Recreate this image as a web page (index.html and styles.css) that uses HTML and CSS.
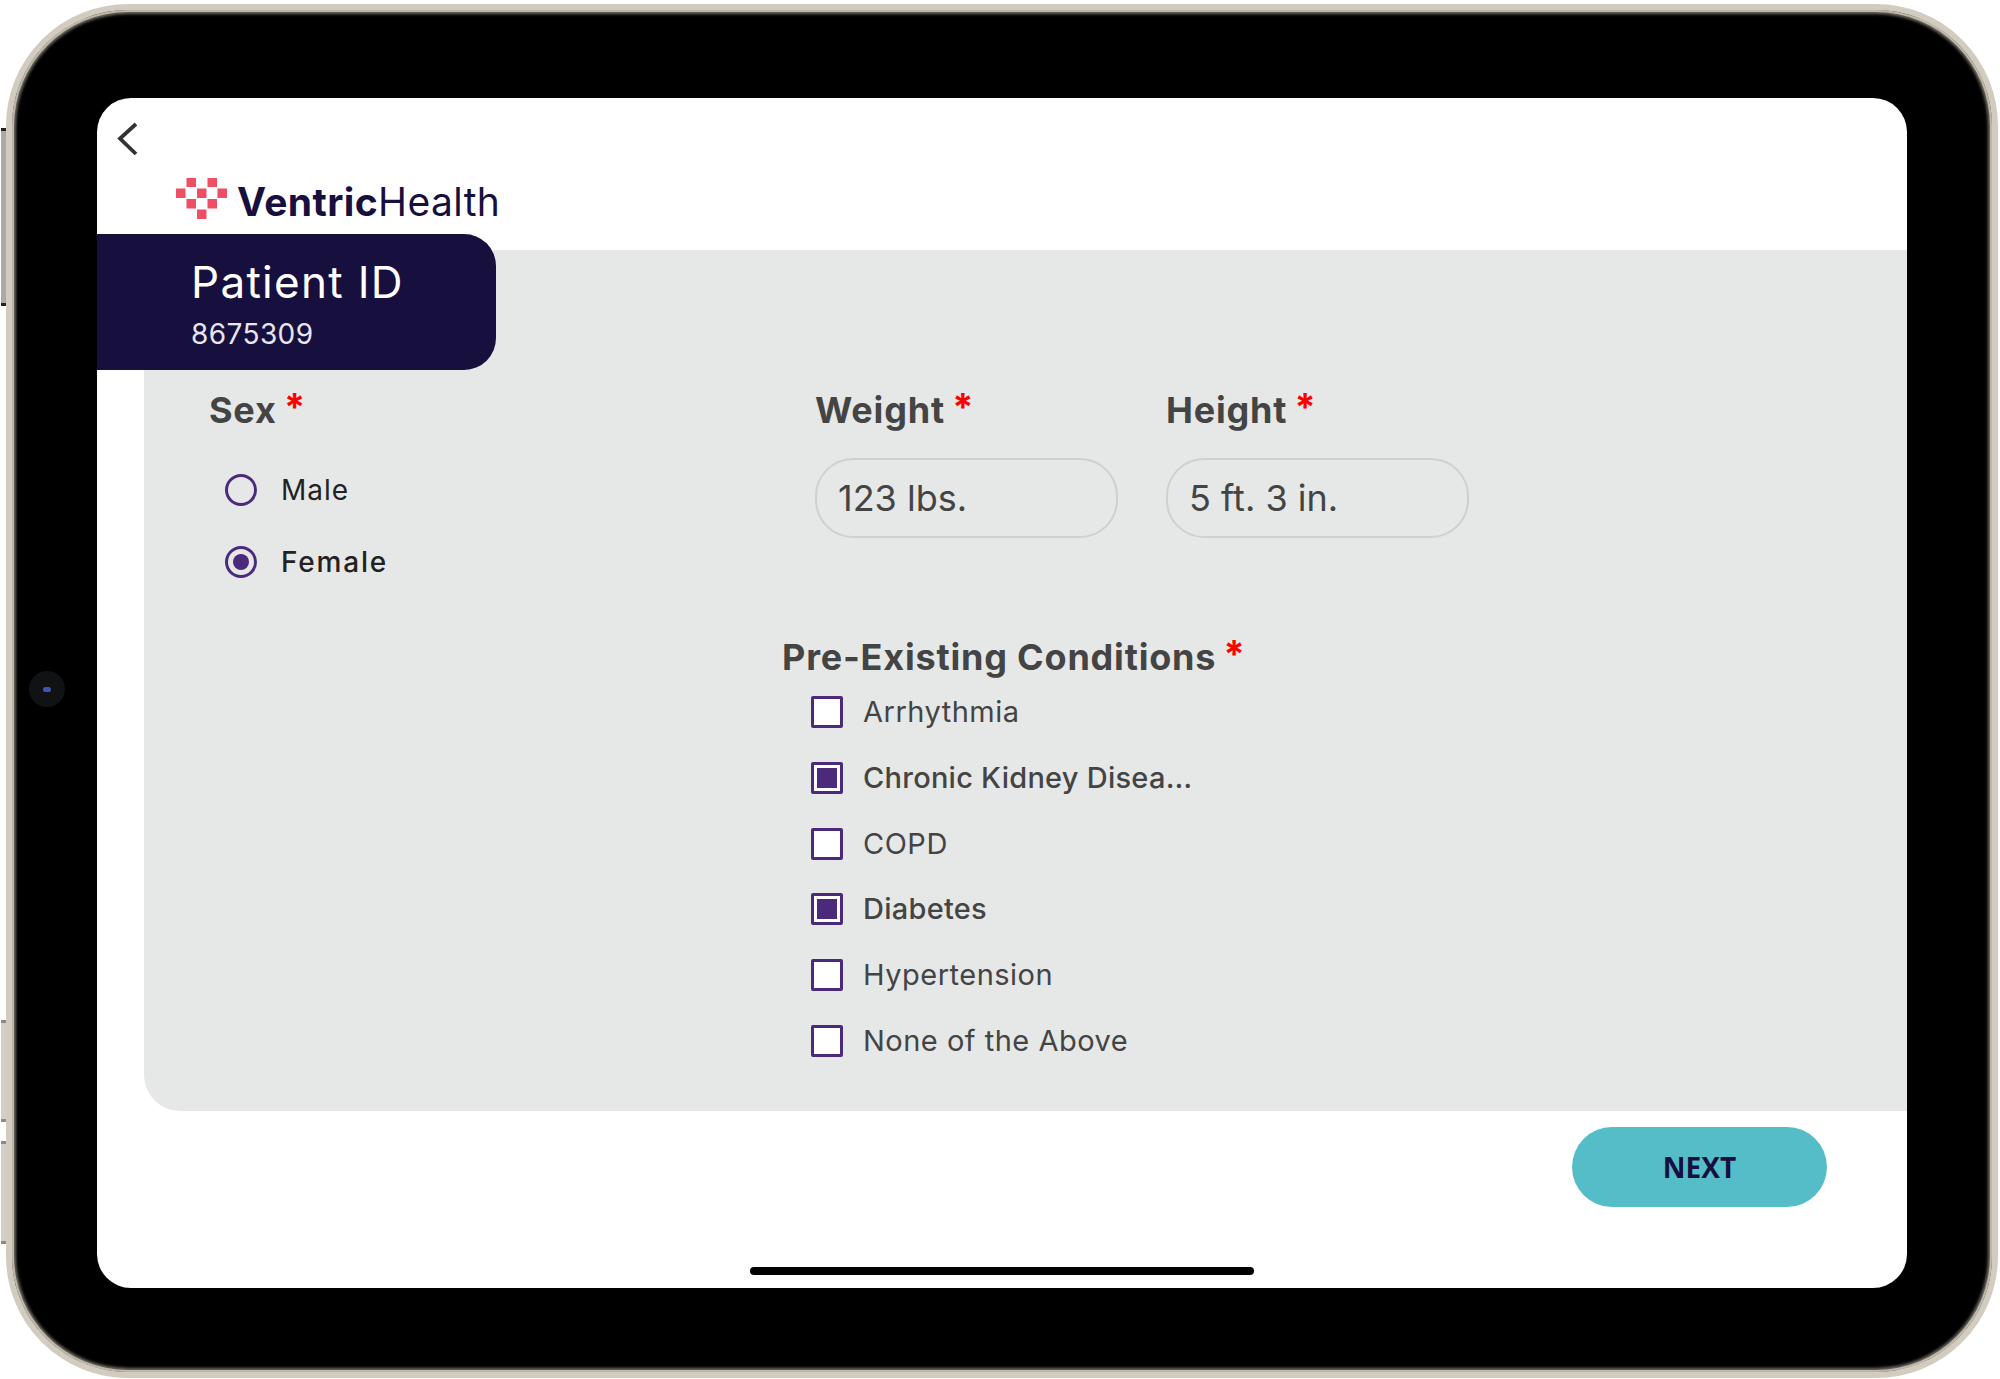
FILE: index.html
```html
<!DOCTYPE html>
<html>
<head>
    <link rel="stylesheet" href="styles.css">
</head>
<body>
    <div class="device">
        <span class="side-btn btn-top"></span>
        <span class="side-btn btn-vol1"></span>
        <span class="side-btn btn-vol2"></span>
        <span class="camera"><span class="lens"></span></span>

        <div class="screen">
            <div class="top">
                <svg class="back" width="24" height="36" viewBox="0 0 24 36">
                    <path d="M20 3 L4 17.5 L20 33" fill="none" stroke="#333" stroke-width="3.8"/>
                </svg>
                <div class="logo">
                    <svg class="heart" width="54" height="44" viewBox="0 0 54 44">
                        <g fill="#ee4f64">
                            <rect x="10.5" y="0" width="9.5" height="9"/>
                            <rect x="31.5" y="0" width="9.5" height="9"/>
                            <rect x="0" y="10.5" width="9.5" height="9.5"/>
                            <rect x="21" y="10.5" width="9.5" height="9.5"/>
                            <rect x="41.5" y="10.5" width="9.5" height="9.5"/>
                            <rect x="10.5" y="21" width="9.5" height="9.5"/>
                            <rect x="31.5" y="21" width="9.5" height="9.5"/>
                            <rect x="21" y="31.5" width="9.5" height="9.5"/>
                        </g>
                    </svg>
                    <span class="brand"><b>Ventric</b>Health</span>
                </div>
            </div>

            <div class="patient-tab">
                <div class="patient-title">Patient ID</div>
                <div class="patient-num">8675309</div>
            </div>

            <div class="panel">
                <div class="sex-col">
                    <div class="label">Sex <span class="req">*</span></div>
                    <div class="radio-list">
                        <div class="radio-row"><span class="radio"></span><span>Male</span></div>
                        <div class="radio-row"><span class="radio on"></span><span class="bold">Female</span></div>
                    </div>
                </div>
                <div class="right-col">
                    <div class="measures">
                        <div class="field">
                            <div class="label">Weight <span class="req">*</span></div>
                            <div class="input">123 lbs.</div>
                        </div>
                        <div class="field">
                            <div class="label">Height <span class="req">*</span></div>
                            <div class="input">5 ft. 3 in.</div>
                        </div>
                    </div>
                    <div class="label cond-label">Pre-Existing Conditions <span class="req">*</span></div>
                    <div class="check-list">
                        <div class="check-row"><span class="check"></span><span>Arrhythmia</span></div>
                        <div class="check-row"><span class="check on"></span><span class="bold">Chronic Kidney Disea…</span></div>
                        <div class="check-row"><span class="check"></span><span>COPD</span></div>
                        <div class="check-row"><span class="check on"></span><span class="bold">Diabetes</span></div>
                        <div class="check-row"><span class="check"></span><span>Hypertension</span></div>
                        <div class="check-row"><span class="check"></span><span>None of the Above</span></div>
                    </div>
                </div>
            </div>

            <div class="bottom">
                <button class="next">NEXT</button>
            </div>
            <div class="home-bar"></div>
        </div>
    </div>
</body>
</html>
```

FILE: styles.css
```css
html, body {
    margin: 0;
    background: #fff;
}
body {
    width: 2000px;
    height: 1379px;
    overflow: hidden;
    font-family: "Inter", "Liberation Sans", sans-serif;
}
.device {
    position: relative;
    box-sizing: border-box;
    width: 1992px;
    height: 1374px;
    margin: 4px 0 0 6px;
    background: #000;
    border: 6px solid #d2ccc0;
    border-radius: 122px;
    box-shadow: inset 0 0 0 2px #bdb7aa, inset 0 0 3px 4px #6f6b63;
    padding: 88px 85px 78px 85px;
}
.side-btn {
    position: absolute;
    left: -11px;
    box-sizing: border-box;
    width: 5px;
    background: #d4cfc5;
    border-top: 3px solid #8d8a84;
    border-bottom: 3px solid #8d8a84;
}
.btn-top {
    top: 118px;
    height: 178px;
    background: #aaa9a6;
    border-color: #222;
}
.btn-vol1 {
    top: 1010px;
    height: 102px;
}
.btn-vol2 {
    top: 1131px;
    height: 103px;
}
.camera {
    position: absolute;
    left: 17px;
    top: 661px;
    width: 36px;
    height: 36px;
    border-radius: 50%;
    background: #101214;
    display: flex;
    align-items: center;
    justify-content: center;
}
.lens {
    width: 8px;
    height: 5px;
    border-radius: 3px;
    background: #3f56b8;
}
.screen {
    position: relative;
    height: 1190px;
    background: #fff;
    border-radius: 34px;
    overflow: hidden;
}
.top {
    height: 152px;
    position: relative;
}
.back {
    display: block;
    padding: 23px 0 0 19px;
}
.logo {
    display: flex;
    align-items: flex-end;
    gap: 7px;
    margin: 21px 0 0 79px;
}
.brand {
    font-size: 39px;
    line-height: 44px;
    color: #17103f;
    letter-spacing: 0.4px;
    margin-bottom: -2px;
}
.brand b {
    font-weight: 700;
}
.patient-tab {
    position: absolute;
    left: 0;
    top: 136px;
    box-sizing: border-box;
    width: 399px;
    height: 136px;
    background: #17103f;
    border-radius: 0 32px 32px 0;
    padding: 22px 0 0 94px;
    color: #fff;
}
.patient-title {
    font-size: 44px;
    line-height: 52px;
    letter-spacing: 1.3px;
}
.patient-num {
    font-size: 28px;
    line-height: 34px;
    margin-top: 9px;
    letter-spacing: 0.4px;
    color: #e6e6ee;
}
.panel {
    display: flex;
    box-sizing: border-box;
    height: 861px;
    margin-left: 47px;
    background: #e6e8e7;
    border-bottom-left-radius: 36px;
    padding: 138px 0 0 65px;
}
.sex-col {
    width: 573px;
}
.label {
    font-size: 36px;
    line-height: 44px;
    font-weight: 700;
    letter-spacing: 0.8px;
    color: #444;
}
.req {
    color: #f00;
    font-size: 38px;
    line-height: 20px;
    vertical-align: 2px;
    margin-left: -2px;
}
.radio-list {
    display: flex;
    flex-direction: column;
    gap: 40px;
    margin: 42px 0 0 16px;
}
.radio-row {
    display: flex;
    align-items: center;
    gap: 24px;
    font-size: 28px;
    line-height: 32px;
    letter-spacing: 1px;
    color: #222;
}
.radio-row .bold {
    letter-spacing: 1.8px;
}
.bold {
    font-weight: 500;
}
.radio {
    box-sizing: border-box;
    width: 32px;
    height: 32px;
    border: 3px solid #4b2a7b;
    border-radius: 50%;
}
.radio.on {
    padding: 5px;
    background: #4b2a7b content-box;
}
.measures {
    display: flex;
    gap: 48px;
    margin-left: 33px;
}
.field {
    width: 303px;
}
.input {
    box-sizing: border-box;
    height: 80px;
    margin-top: 26px;
    padding: 0 21px;
    border: 2px solid #cfd0d0;
    border-radius: 38px;
    font-size: 36px;
    line-height: 76px;
    color: #444;
}
.cond-label {
    margin-top: 97px;
}
.check-list {
    display: flex;
    flex-direction: column;
    gap: 33.8px;
    margin: 17px 0 0 29px;
}
.check-row {
    display: flex;
    align-items: center;
    gap: 20px;
    font-size: 29px;
    line-height: 32px;
    letter-spacing: 0.5px;
    color: #444;
}
.check-row .bold {
    letter-spacing: 0.25px;
}
.check {
    box-sizing: border-box;
    width: 32px;
    height: 32px;
    background: #fff;
    border: 3px solid #4b2a7b;
    border-radius: 2px;
}
.check.on {
    padding: 3px;
    background: linear-gradient(#4b2a7b, #4b2a7b) content-box, #fff;
}
.bottom {
    display: flex;
    justify-content: flex-end;
    padding: 16px 80px 0 0;
}
.next {
    width: 255px;
    height: 80px;
    border: none;
    border-radius: 40px;
    background: #54bdc8;
    color: #17103f;
    font-family: "Open Sans", sans-serif;
    font-weight: 700;
    font-size: 28px;
    cursor: pointer;
}
.home-bar {
    position: absolute;
    left: 653px;
    bottom: 13px;
    width: 504px;
    height: 8px;
    border-radius: 4px;
    background: #000;
}
```
